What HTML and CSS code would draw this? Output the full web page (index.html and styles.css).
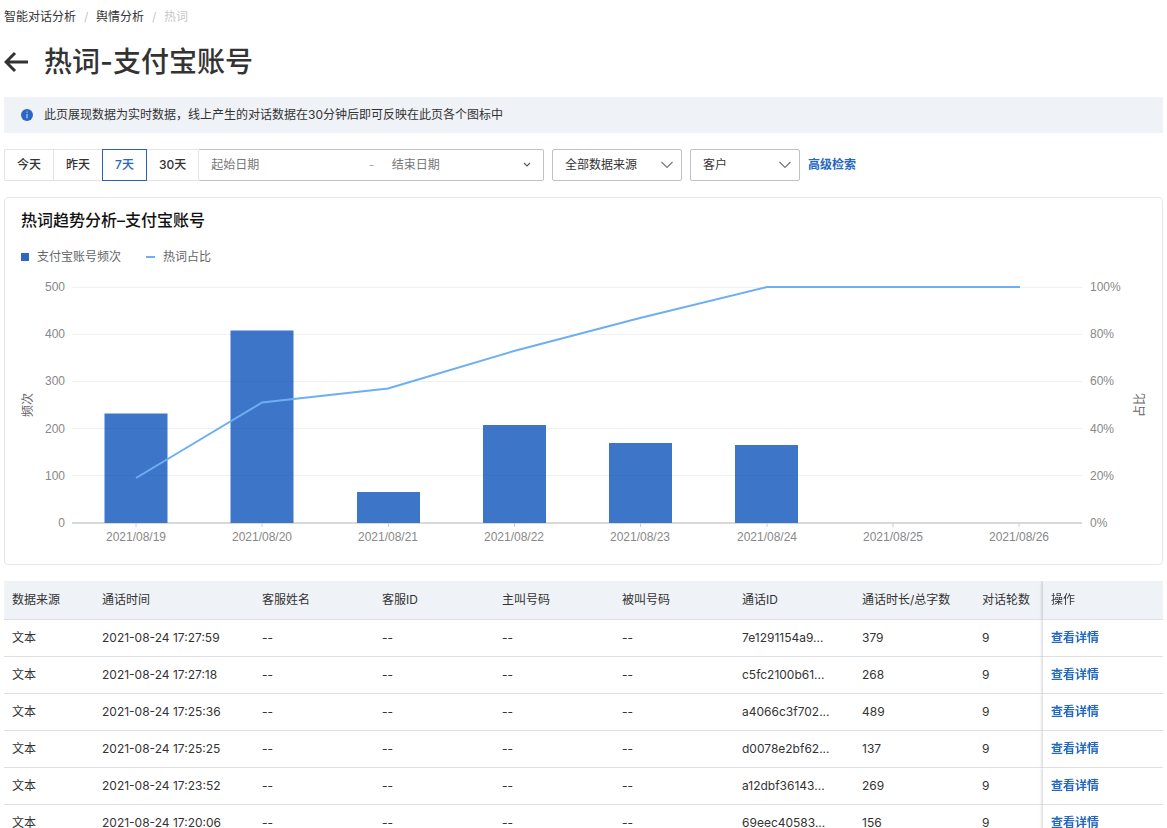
FILE: index.html
```html
<!DOCTYPE html>
<html lang="zh-CN">
<head>
    <meta charset="UTF-8">
    <meta name="viewport" content="width=device-width, initial-scale=1.0">
    <title>热词-支付宝账号</title>
    <link rel="stylesheet" href="styles.css">
</head>
<body>
    <nav class="breadcrumb">
        <a href="#">智能对话分析</a>
        <span class="separator">/</span>
        <a href="#">舆情分析</a>
        <span class="separator">/</span>
        <span class="current">热词</span>
    </nav>

    <header class="page-header">
        <a class="back" href="#" aria-label="返回">
            <svg width="24" height="22" viewBox="0 0 24 22"><path d="M11 2L2 11l9 9M2 11h22" fill="none" stroke="currentColor" stroke-width="3"/></svg>
        </a>
        <h1>热词-支付宝账号</h1>
    </header>

    <div class="notice">
        <svg width="12" height="12" viewBox="0 0 12 12">
            <circle cx="6" cy="6" r="6" fill="#2a66c4"/>
            <path d="M6 2.6v1.2M6 5v4.2" stroke="#b9cdee" stroke-width="1.2"/>
        </svg>
        <p>此页展现数据为实时数据，线上产生的对话数据在30分钟后即可反映在此页各个图标中</p>
    </div>

    <form class="filters">
        <div class="range">
            <div class="tabs">
                <button type="button">今天</button>
                <button type="button">昨天</button>
                <button type="button" class="active">7天</button>
                <button type="button">30天</button>
            </div>
            <div class="date-picker">
                <input type="text" class="start" placeholder="起始日期" aria-label="起始日期">
                <span class="dash">-</span>
                <input type="text" class="end-date" placeholder="结束日期" aria-label="结束日期">
                <svg width="8" height="6" viewBox="0 0 8 6"><path d="M1 1l3 3 3-3" fill="none" stroke="#555" stroke-width="1.1"/></svg>
            </div>
        </div>
        <div class="select source">
            <select aria-label="数据来源">
                <option>全部数据来源</option>
            </select>
            <svg width="12" height="8" viewBox="0 0 12 8"><path d="M.5 1L6 6.5 11.500 1" fill="none" stroke="#777" stroke-width="1.2"/></svg>
        </div>
        <div class="select role">
            <select aria-label="角色">
                <option>客户</option>
            </select>
            <svg width="12" height="8" viewBox="0 0 12 8"><path d="M.5 1L6 6.5 11.500 1" fill="none" stroke="#777" stroke-width="1.2"/></svg>
        </div>
        <a class="link" href="#">高级检索</a>
    </form>

    <section class="card">
        <h2>热词趋势分析–支付宝账号</h2>
        <div class="legend">
            <span class="legend-item"><i class="mark-bar"></i>支付宝账号频次</span>
            <span class="legend-item"><i class="mark-line"></i>热词占比</span>
        </div>
        <svg class="chart" viewBox="0 0 1125 272" role="img" aria-label="热词趋势分析">
            <path class="axis" d="M51 247H1061"/>
            <path class="tick" d="M115 247v4M241 247v4M367.500 247v4M493.500 247v4M619.500 247v4M746 247v4M872 247v4M998 247v4"/>
            <!-- bars -->
            <g class="bars">
                <rect x="83.500" y="137.500" width="63" height="109.500"/>
                <rect x="209.500" y="54.500" width="63" height="192.500"/>
                <rect x="336" y="216" width="63" height="31"/>
                <rect x="462" y="149" width="63" height="98"/>
                <rect x="588" y="167" width="63" height="80"/>
                <rect x="714" y="169" width="63" height="78"/>
            </g>
            <!-- grid -->
            <path class="grid" d="M51 11.500H1061M51 58.500H1061M51 105.500H1061M51 152.500H1061M51 199.500H1061"/>
            <polyline class="line" points="115,202 241,126.500 367,112.500 493,75 619,42 746,11 999,11"/>
            <!-- left axis -->
            <g class="labels end">
                <text x="44" y="15">500</text>
                <text x="44" y="62">400</text>
                <text x="44" y="109">300</text>
                <text x="44" y="157">200</text>
                <text x="44" y="204">100</text>
                <text x="44" y="251">0</text>
            </g>
            <!-- right axis -->
            <g class="labels">
                <text x="1069" y="15">100%</text>
                <text x="1069" y="62">80%</text>
                <text x="1069" y="109">60%</text>
                <text x="1069" y="157">40%</text>
                <text x="1069" y="204">20%</text>
                <text x="1069" y="251">0%</text>
            </g>
            <!-- dates -->
            <g class="labels middle">
                <text x="115" y="265">2021/08/19</text>
                <text x="241" y="265">2021/08/20</text>
                <text x="367" y="265">2021/08/21</text>
                <text x="493" y="265">2021/08/22</text>
                <text x="619" y="265">2021/08/23</text>
                <text x="746" y="265">2021/08/24</text>
                <text x="872" y="265">2021/08/25</text>
                <text x="998" y="265">2021/08/26</text>
            </g>
            <g class="axis-title">
                <text transform="translate(11 129) rotate(-90)">频次</text>
                <text transform="translate(1123 129) rotate(-90)">占比</text>
            </g>
        </svg>
    </section>

    <table class="calls">
        <colgroup>
            <col class="col-source">
            <col class="col-time">
            <col class="col">
            <col class="col">
            <col class="col">
            <col class="col">
            <col class="col">
            <col class="col">
            <col>
            <col class="col">
        </colgroup>
        <thead>
            <tr>
                <th>数据来源</th>
                <th>通话时间</th>
                <th>客服姓名</th>
                <th>客服ID</th>
                <th>主叫号码</th>
                <th>被叫号码</th>
                <th>通话ID</th>
                <th>通话时长/总字数</th>
                <th>对话轮数</th>
                <th class="fixed">操作</th>
            </tr>
        </thead>
        <tbody>
            <tr>
                <td>文本</td><td>2021-08-24 17:27:59</td><td>--</td><td>--</td><td>--</td><td>--</td>
                <td>7e1291154a9...</td><td>379</td><td>9</td>
                <td class="fixed"><a class="link" href="#">查看详情</a></td>
            </tr>
            <tr>
                <td>文本</td><td>2021-08-24 17:27:18</td><td>--</td><td>--</td><td>--</td><td>--</td>
                <td>c5fc2100b61...</td><td>268</td><td>9</td>
                <td class="fixed"><a class="link" href="#">查看详情</a></td>
            </tr>
            <tr>
                <td>文本</td><td>2021-08-24 17:25:36</td><td>--</td><td>--</td><td>--</td><td>--</td>
                <td>a4066c3f702...</td><td>489</td><td>9</td>
                <td class="fixed"><a class="link" href="#">查看详情</a></td>
            </tr>
            <tr>
                <td>文本</td><td>2021-08-24 17:25:25</td><td>--</td><td>--</td><td>--</td><td>--</td>
                <td>d0078e2bf62...</td><td>137</td><td>9</td>
                <td class="fixed"><a class="link" href="#">查看详情</a></td>
            </tr>
            <tr>
                <td>文本</td><td>2021-08-24 17:23:52</td><td>--</td><td>--</td><td>--</td><td>--</td>
                <td>a12dbf36143...</td><td>269</td><td>9</td>
                <td class="fixed"><a class="link" href="#">查看详情</a></td>
            </tr>
            <tr>
                <td>文本</td><td>2021-08-24 17:20:06</td><td>--</td><td>--</td><td>--</td><td>--</td>
                <td>69eec40583...</td><td>156</td><td>9</td>
                <td class="fixed"><a class="link" href="#">查看详情</a></td>
            </tr>
        </tbody>
    </table>
</body>
</html>
```
FILE: styles.css
```css
* {
    box-sizing: border-box;
}
body {
    margin: 0;
    padding: 0 4px;
    height: 100vh;
    overflow: hidden;
    background: #fff;
    color: #333;
    font-family: Inter, "Noto Sans CJK SC", sans-serif;
    font-size: 12px;
    line-height: 20px;
}
a {
    color: inherit;
    text-decoration: none;
}
.link {
    color: #2468c0;
    font-weight: 600;
}

/* Breadcrumb and title */
.breadcrumb {
    display: flex;
    gap: 8px;
    padding: 7px 0 5px;
}
.separator,
.current {
    color: #c8c8c8;
}
.separator {
    width: 4px;
}
.page-header {
    display: flex;
    align-items: center;
    gap: 16px;
    margin: 8px 0 13px;
}
.back {
    display: flex;
}
h1 {
    margin: 0;
    font-size: 28px;
    font-weight: 500;
    line-height: 44px;
}
.notice {
    display: flex;
    align-items: center;
    gap: 11px;
    padding: 8px 17px;
    background: #eff2f7;
}
.notice p {
    margin: 0;
}

/* Filters */
.filters {
    display: flex;
    align-items: center;
    gap: 8px;
    margin: 16px 0;
}
.range {
    display: flex;
    flex: 0 1 540px;
}
.tabs {
    display: flex;
}
.tabs button {
    height: 32px;
    padding: 0 12px;
    border: 1px solid #e3e4e6;
    border-right: none;
    background: #fff;
    color: #333;
    font: inherit;
    font-weight: 500;
}
.tabs button:first-child {
    border-radius: 2px 0 0 2px;
}
.tabs .active {
    border: 1px solid #2a62b0;
    color: #2468c0;
}
.tabs .active + button {
    border-left: none;
}
.date-picker {
    display: flex;
    align-items: center;
    flex: 1;
    min-width: 0;
    height: 32px;
    padding: 0 12px;
    border: 1px solid #c0c2c5;
    border-left-color: #e3e4e6;
    border-radius: 2px;
}
.date-picker input {
    width: 0;
    padding: 0;
    border: none;
    outline: none;
    font: inherit;
}
.date-picker .start {
    flex: 6;
}
.date-picker .end-date {
    flex: 5;
}
.date-picker input::placeholder {
    color: #777;
}
.dash {
    width: 23px;
    color: #aaa;
}
.select {
    display: flex;
    align-items: center;
    position: relative;
}
.source {
    width: 130px;
}
.role {
    width: 110px;
}
.select select {
    width: 100%;
    height: 32px;
    padding: 0 12px;
    border: 1px solid #c0c2c5;
    border-radius: 2px;
    background: #fff;
    color: #333;
    font: inherit;
    appearance: none;
}
.select svg {
    position: absolute;
    right: 9px;
    pointer-events: none;
}

/* Chart */
.card {
    padding: 8px 16px 16px;
    border: 1px solid #e6e7e9;
    border-radius: 4px;
}
h2 {
    margin: 0 0 13px;
    color: #111;
    font-size: 16px;
    font-weight: 500;
    line-height: 28px;
}
.legend {
    display: flex;
    gap: 25px;
    margin-bottom: 9px;
    color: #666;
}
.legend-item {
    display: flex;
    align-items: center;
    gap: 8px;
}
.mark-bar {
    width: 8px;
    height: 8px;
    background: #2f69bf;
}
.mark-line {
    width: 9px;
    height: 2px;
    background: #6fb0f5;
}
.chart {
    display: block;
    width: 100%;
    overflow: visible;
}
.bars {
    fill: #3d76c9;
}
.grid {
    stroke: #1b3f8b;
    stroke-opacity: 0.07;
}
.axis {
    stroke: #d8d9db;
    stroke-width: 2;
}
.tick {
    stroke: #ccc;
}
.line {
    fill: none;
    stroke: #6eaff3;
    stroke-width: 2;
    stroke-linejoin: round;
}
.labels {
    fill: #888;
    font-family: "Liberation Sans", Arial, sans-serif;
    font-size: 12px;
}
.end {
    text-anchor: end;
}
.middle {
    text-anchor: middle;
}
.axis-title {
    fill: #666;
    text-anchor: middle;
}

/* Call list */
.calls {
    width: 100%;
    margin-top: 16px;
    table-layout: fixed;
    border-collapse: separate;
    border-spacing: 0;
}
.col-source {
    width: 90px;
}
.col-time {
    width: 160px;
}
.col {
    width: 120px;
}
.calls th,
.calls td {
    padding: 8px;
    border-bottom: 1px solid #dfe0e3;
    background: #fff;
    text-align: left;
    white-space: nowrap;
}
.calls th {
    padding: 9px 8px;
    background: #eff2f7;
    font-weight: 400;
}
.calls .fixed {
    position: sticky;
    right: 0;
    box-shadow: -1px 0 3px rgba(0, 0, 0, 0.2);
    clip-path: inset(0 0 0 -5px);
}
```
